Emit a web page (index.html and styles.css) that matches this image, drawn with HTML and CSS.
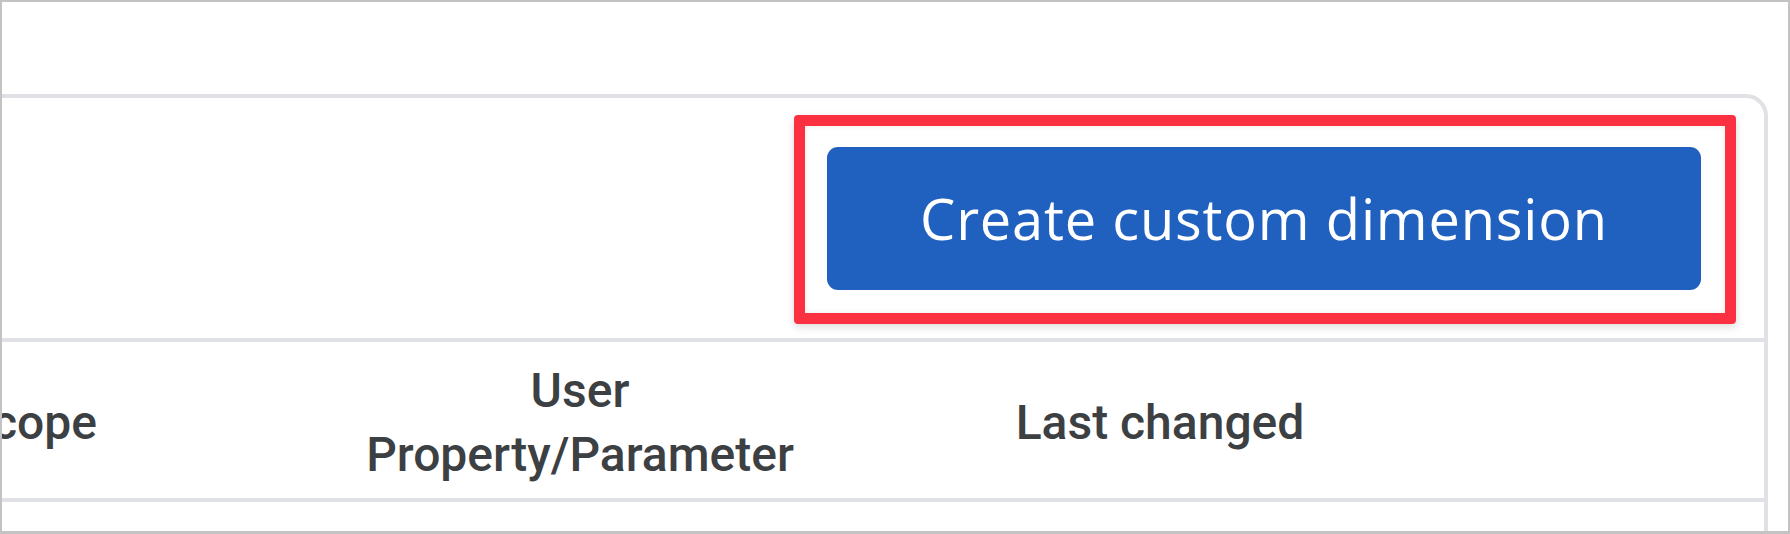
FILE: index.html
```html
<!DOCTYPE html>
<html lang="en">
<head>
  <meta charset="UTF-8">
  <meta name="viewport" content="width=device-width, initial-scale=1.0">
  <title>Custom definitions</title>
  <link rel="stylesheet" href="styles.css">
</head>
<body>

  <div class="frame">
    <div class="card">
      <div class="toolbar">
        <div class="highlight">
          <button class="btn-create">Create custom dimension</button>
        </div>
      </div>

      <div class="table-head">
        <div class="col">Scope</div>
        <div class="col">User<br>Property/Parameter</div>
        <div class="col">Last changed</div>
        <div class="col"></div>
      </div>
      <div class="table-row"></div>
    </div>
  </div>

</body>
</html>
```

FILE: styles.css
```css
* {
  margin: 0;
  padding: 0;
  box-sizing: border-box;
}
body {
  background-color: #fff;
  font-family: Roboto, "Liberation Sans", Arial, sans-serif;
}
.frame {
  height: 534px;
  border: 2px solid #c3c3c3;
  border-bottom-width: 3px;
  padding-top: 92px;
  overflow: hidden;
}
.card {
  margin-left: -262px;
  margin-right: 20px;
  height: 600px;
  border: 4px solid #e0e1e5;
  border-top-right-radius: 22px;
}
.toolbar {
  height: 240px;
  display: flex;
  justify-content: flex-end;
  align-items: center;
  padding-right: 28px;
  padding-top: 2px;
}
.highlight {
  padding: 21px 24px 23px 22px;
  border: 11px solid #fb3142;
  border-radius: 4px;
  box-shadow: 0 3px 8px rgba(0, 0, 0, 0.14), inset 0 0 6px rgba(0, 0, 0, 0.08);
}
.btn-create {
  display: block;
  width: 874px;
  height: 143px;
  border: none;
  border-radius: 11px;
  background-color: #2061bf;
  color: #fff;
  font-family: "Open Sans", sans-serif;
  font-size: 56px;
  font-weight: 500;
  letter-spacing: 0.8px;
  cursor: pointer;
}
.table-head {
  display: grid;
  grid-template-columns: 572px 528px 632px 1fr;
  align-items: center;
  height: 164px;
  padding-top: 5px;
  border-top: 4px solid #e0e1e5;
  border-bottom: 4px solid #e0e1e5;
}
.col {
  text-align: center;
  font-size: 48px;
  font-weight: 500;
  line-height: 64px;
  color: #3c4043;
}
.table-row {
  height: 100px;
}
```
